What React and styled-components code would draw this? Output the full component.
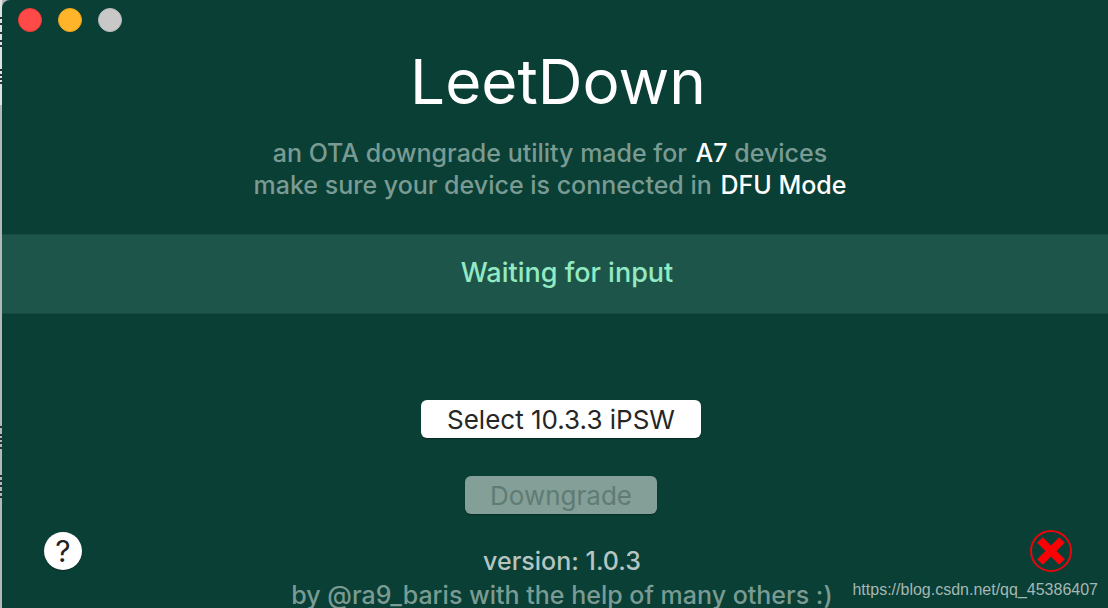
import React from 'react';
import styled, { createGlobalStyle } from 'styled-components';

const palette = {
  window: '#0a3f35',
  band: '#1e554b',
  muted: '#7a9b93',
  mint: '#93eac2',
  version: '#b5c5c1',
};

const GlobalStyle = createGlobalStyle`
  * {
    box-sizing: border-box;
  }
  body {
    margin: 0;
    overflow: hidden;
    background: #b4b8b6;
    font-family: Inter, "Liberation Sans", sans-serif;
  }
`;

const Desktop = styled.div`
  position: relative;
  display: flex;
  height: 100vh;
  overflow: hidden;
`;

/* the sliver of the page behind the window */
const Behind = styled.svg`
  flex: none;
  width: 2px;
  height: 608px;
`;

const WindowBlock = styled.main`
  flex: 1;
  min-width: 0;
  background: ${palette.window};
  border-top-left-radius: 8px;
`;

const TitleBar = styled.div`
  display: flex;
  gap: 16px;
  padding: 8px 16px;
`;

const Light = styled.button`
  width: 24px;
  height: 24px;
  padding: 0;
  border: 1px solid ${({ $edge }) => $edge};
  border-radius: 50%;
  background: ${({ $color }) => $color};
`;

const Title = styled.h1`
  margin: 0;
  padding-left: 6px;
  color: #fff;
  font-size: 62px;
  font-weight: 400;
  line-height: 84px;
  text-align: center;
`;

const Intro = styled.p`
  margin: 0;
  padding: 13px 10px 33px 0;
  color: ${palette.muted};
  font-size: 25px;
  font-weight: 500;
  line-height: 32px;
  text-align: center;

  strong {
    margin-left: 2px;
    color: #fff;
    font-weight: 500;
  }
`;

const Status = styled.div`
  padding: 21px 0 23px 24px;
  border: solid #164a40;
  border-width: 1px 0;
  background: ${palette.band};
  color: ${palette.mint};
  font-size: 27px;
  font-weight: 500;
  line-height: 34px;
  text-align: center;
`;

const Actions = styled.div`
  display: flex;
  flex-direction: column;
  align-items: center;
  gap: 38px;
  padding: 86px 0 0 12px;
`;

const ActionButton = styled.button`
  height: 38px;
  padding: 2px 0 0;
  width: ${({ $wide }) => ($wide ? 280 : 192)}px;
  border: none;
  border-radius: 6px;
  background: #fff;
  box-shadow: 0 1px 1px rgba(0, 0, 0, 0.3);
  color: #262626;
  font-family: inherit;
  font-size: 26px;
  line-height: 36px;
  white-space: nowrap;

  &:disabled {
    background: #839f98;
    color: #607b73;
  }
`;

const Footer = styled.footer`
  display: grid;
  grid-template-columns: 42px 1fr 42px;
  padding: 16px 36px 0 42px;
`;

const HelpButton = styled.button`
  width: 38px;
  height: 38px;
  margin-top: 2px;
  padding: 0;
  border: none;
  border-radius: 50%;
  background: #fff;
  box-shadow: 0 1px 1px rgba(0, 0, 0, 0.3);
  color: #222;
  font-family: inherit;
  font-size: 30px;
  font-weight: 400;
  line-height: 38px;
`;

const Credits = styled.div`
  padding: 14px 0 0 8px;
  color: ${palette.muted};
  font-size: 25px;
  font-weight: 500;
  line-height: 34px;
  text-align: center;
  white-space: nowrap;
`;

const Version = styled.div`
  color: ${palette.version};
`;

const CrossIcon = styled.svg`
  width: 42px;
  height: 42px;
`;

/* sits on top of everything in the corner */
const SourceLink = styled.a`
  position: absolute;
  right: 10px;
  bottom: 8px;
  color: #a5b7b3;
  font-family: "Liberation Sans", sans-serif;
  font-size: 16px;
  line-height: 20px;
  text-decoration: none;
`;

const marks = [17, 23, 32, 40, 45, 69, 74, 78, 82, 426, 434, 438, 442, 447, 475, 480, 485, 491, 496];

const App = () => {
  return (
    <Desktop>
      <GlobalStyle />
      <Behind viewBox="0 0 2 608" aria-hidden="true">
        <rect width="2" height="105" fill="#e0e2e1" />
        {marks.map(y => (
          <rect key={y} y={y} width="2" height="2" fill="#2c3034" />
        ))}
      </Behind>
      <WindowBlock>
        <TitleBar>
          <Light aria-label="Close" $color="#ff4a48" $edge="#e93a38" />
          <Light aria-label="Minimize" $color="#ffb429" $edge="#eda51c" />
          <Light aria-label="Zoom" $color="#c8c8c8" $edge="#bababa" />
        </TitleBar>
        <Title>LeetDown</Title>
        <Intro>
          an OTA downgrade utility made for <strong>A7</strong> devices
          <br />
          make sure your device is connected in <strong>DFU Mode</strong>
        </Intro>
        <Status role="status">Waiting for input</Status>
        <Actions>
          <ActionButton $wide>Select 10.3.3 iPSW</ActionButton>
          <ActionButton disabled>Downgrade</ActionButton>
        </Actions>
        <Footer>
          <HelpButton aria-label="Help">?</HelpButton>
          <Credits>
            <Version>version: 1.0.3</Version>
            <div>by @ra9_baris with the help of many others :)</div>
          </Credits>
          <CrossIcon viewBox="0 0 42 42" role="img" aria-label="Not connected">
            <circle cx="21" cy="21" r="20" fill="none" stroke="#e8060c" strokeWidth="2" />
            <path d="M10 10 32 32M32 10 10 32" stroke="#fb0207" strokeWidth="8" />
          </CrossIcon>
        </Footer>
      </WindowBlock>
      <SourceLink href="https://blog.csdn.net/qq_45386407">https://blog.csdn.net/qq_45386407</SourceLink>
    </Desktop>
  );
};

export default App;
